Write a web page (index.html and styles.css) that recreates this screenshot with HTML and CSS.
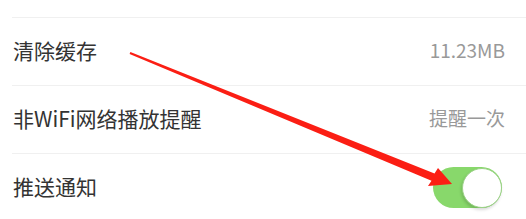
FILE: index.html
```html
<!DOCTYPE html>
<html lang="zh-CN">
<head>
    <meta charset="UTF-8">
    <meta name="viewport" content="width=device-width, initial-scale=1.0">
    <title>设置</title>
    <link rel="stylesheet" href="styles.css">
</head>
<body>
    <div class="settings">
        <div class="row">
            <span class="label">清除缓存</span>
            <span class="value">11.23MB</span>
        </div>
        <div class="row">
            <span class="label">非WiFi网络播放提醒</span>
            <span class="value">提醒一次</span>
        </div>
        <div class="row">
            <span class="label">推送通知</span>
            <div class="switch on"><div class="knob"></div></div>
        </div>
    </div>

    <svg class="arrow" width="526" height="219" viewBox="0 0 526 219">
        <polygon points="130.4,52.1 434.5,173.5 438,168 452,184 428,186 431.5,180.7 129.6,53.9" fill="#fb1e14"/>
    </svg>
</body>
</html>
```

FILE: styles.css
```css
body {
    margin: 0;
    background-color: #fff;
    font-family: "Noto Sans CJK SC", "Noto Sans", sans-serif;
    width: 526px;
    height: 219px;
    overflow: hidden;
    position: relative;
}

.settings {
    padding-top: 17px;
    padding-left: 12px;
}

.row {
    display: flex;
    justify-content: space-between;
    align-items: center;
    height: 67px;
    border-top: 1px solid #f0f0f0;
    padding-left: 1px;
    padding-right: 21px;
}

.label {
    font-size: 21px;
    color: #333;
    margin-bottom: 4px;
}

.value {
    font-size: 19px;
    color: #999;
    margin-bottom: 4px;
}

.switch {
    width: 69px;
    height: 41px;
    border-radius: 21px;
    background-color: #e5e5e5;
    margin-right: 3px;
    display: flex;
    align-items: center;
    box-sizing: border-box;
}

.switch.on {
    background-color: #88d86b;
    justify-content: flex-end;
}

.knob {
    width: 40px;
    height: 40px;
    border-radius: 50%;
    background-color: #fff;
    box-sizing: border-box;
    border: 1px solid #9bd287;
    box-shadow: -1px 2px 3px rgba(0, 0, 0, 0.15);
}

.arrow {
    position: absolute;
    left: 0;
    top: 0;
}
```
